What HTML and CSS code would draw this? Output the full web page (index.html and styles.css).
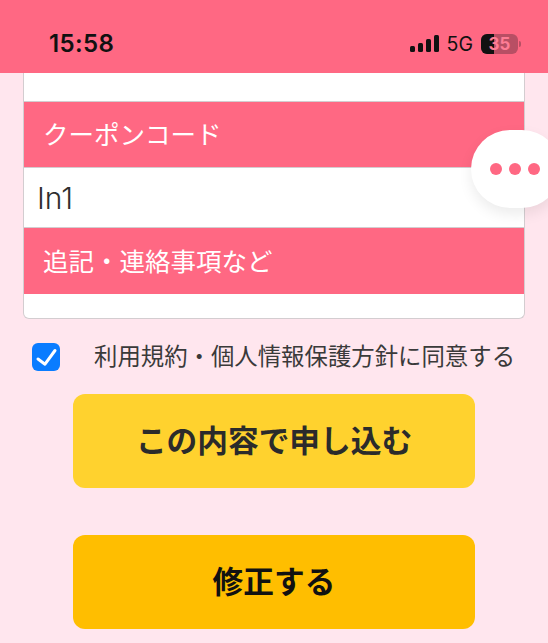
FILE: index.html
```html
<!DOCTYPE html>
<html lang="ja">
<head>
<meta charset="utf-8">
<title>確認</title>
<link rel="stylesheet" href="styles.css">
</head>
<body>
<header class="status">
  <span class="time">15:58</span>
  <div class="status-right">
    <svg class="signal" width="29" height="18" viewBox="0 0 29 18"><rect x="0" y="11" width="5" height="6" rx="1.5"/><rect x="8" y="8" width="5" height="9" rx="1.5"/><rect x="16" y="4" width="5" height="13" rx="1.5"/><rect x="24" y="0" width="5" height="17" rx="1.5"/></svg>
    <span class="net">5G</span>
    <div class="battery"><div class="battery-fill"></div><span class="battery-num">35</span></div>
    <span class="battery-cap"></span>
  </div>
</header>
<main class="content">
  <section class="card">
    <div class="blank-top"></div>
    <div class="label">クーポンコード</div>
    <div class="value">In1</div>
    <div class="label label-second">追記・連絡事項など</div>
    <div class="blank-bottom"></div>
  </section>
  <label class="agree">
    <span class="check"><svg width="28" height="28" viewBox="0 0 28 28"><path d="M6 16l7 5.2L23 7.5" fill="none" stroke="#fff" stroke-width="3" stroke-linecap="round" stroke-linejoin="round"/></svg></span>
    <span class="agree-text">利用規約・個人情報保護方針に同意する</span>
  </label>
  <div class="actions">
    <button class="btn btn-submit">この内容で申し込む</button>
    <button class="btn btn-edit">修正する</button>
  </div>
</main>
<aside class="float"><i></i><i></i><i></i></aside>
</body>
</html>
```
FILE: styles.css
```css
* { box-sizing: border-box; }
html, body { margin: 0; height: 643px; overflow: hidden; }
body { background: #ffe6ee; font-family: "Noto Sans CJK JP", "Noto Sans", sans-serif; color: #333; position: relative; }
.status { height: 73px; background: #ff6883; display: flex; justify-content: space-between; align-items: center; padding: 14px 27px 0 49px; color: #111; }
.time { font-family: Inter, "Liberation Sans", sans-serif; font-weight: 600; font-size: 24px; letter-spacing: .4px; }
.status-right { display: flex; align-items: center; }
.signal { fill: #111; margin-right: 8px; }
.net { font-family: Inter, "Liberation Sans", sans-serif; font-size: 19.5px; font-weight: 400; margin-right: 8px; }
.battery { width: 37px; height: 20px; border-radius: 6px; background: #b84f64; position: relative; overflow: hidden; display: flex; align-items: center; justify-content: center; }
.battery-fill { position: absolute; left: 0; top: 0; bottom: 0; width: 13px; background: #111; }
.battery-num { position: relative; font-family: Inter, "Liberation Sans", sans-serif; font-weight: 700; font-size: 17px; color: #ff7d95; }
.battery-cap { width: 2px; height: 6px; margin-left: 1px; background: #b84f64; border-radius: 0 2px 2px 0; }
.content { padding: 0 23px; }
.card { width: 502px; background: #fff; border: 1px solid #d3cdd0; border-top: 0; border-radius: 0 0 6px 6px; overflow: hidden; }
.blank-top { height: 28px; }
.label { height: 67px; background: #ff6883; color: #fff; font-size: 25.5px; padding: 0 0 4px 19px; display: flex; align-items: center; border-top: 1px solid #d3cdd0; border-bottom: 1px solid #d3cdd0; }
.label-second { height: 67px; border-bottom: 0; }
.value { height: 59px; font-size: 30px; font-weight: 300; padding-left: 13px; display: flex; align-items: center; font-family: Inter, "Noto Sans", sans-serif; color: #2e2e2e; }
.blank-bottom { height: 24px; }
.agree { display: flex; align-items: center; margin-top: 23px; padding-left: 9px; }
.check { width: 28px; height: 28px; border-radius: 6px; background: #0a7cff; display: block; flex: none; }
.check svg { display: block; }
.agree-text { margin-left: 34px; font-size: 23.4px; line-height: 26px; padding-bottom: 4px; color: #3a3a3a; white-space: nowrap; }
.actions { display: flex; flex-direction: column; gap: 47px; margin-top: 22px; padding-left: 50px; }
.btn { width: 402px; height: 94px; border: 0; border-radius: 12px; padding: 0 0 5px; font-family: inherit; font-weight: 700; font-size: 30.7px; color: #2b2b2b; }
.btn-submit { background: #ffd22e; }
.btn-edit { background: #ffbe00; color: #111; }
.float { position: absolute; left: 471px; top: 130px; width: 90px; height: 78px; border-radius: 39px; background: #fff; box-shadow: 0 6px 14px rgba(0,0,0,.08); display: flex; align-items: center; gap: 7px; padding-left: 19px; }
.float i { width: 12px; height: 12px; border-radius: 50%; background: #ff6883; display: block; }
```
